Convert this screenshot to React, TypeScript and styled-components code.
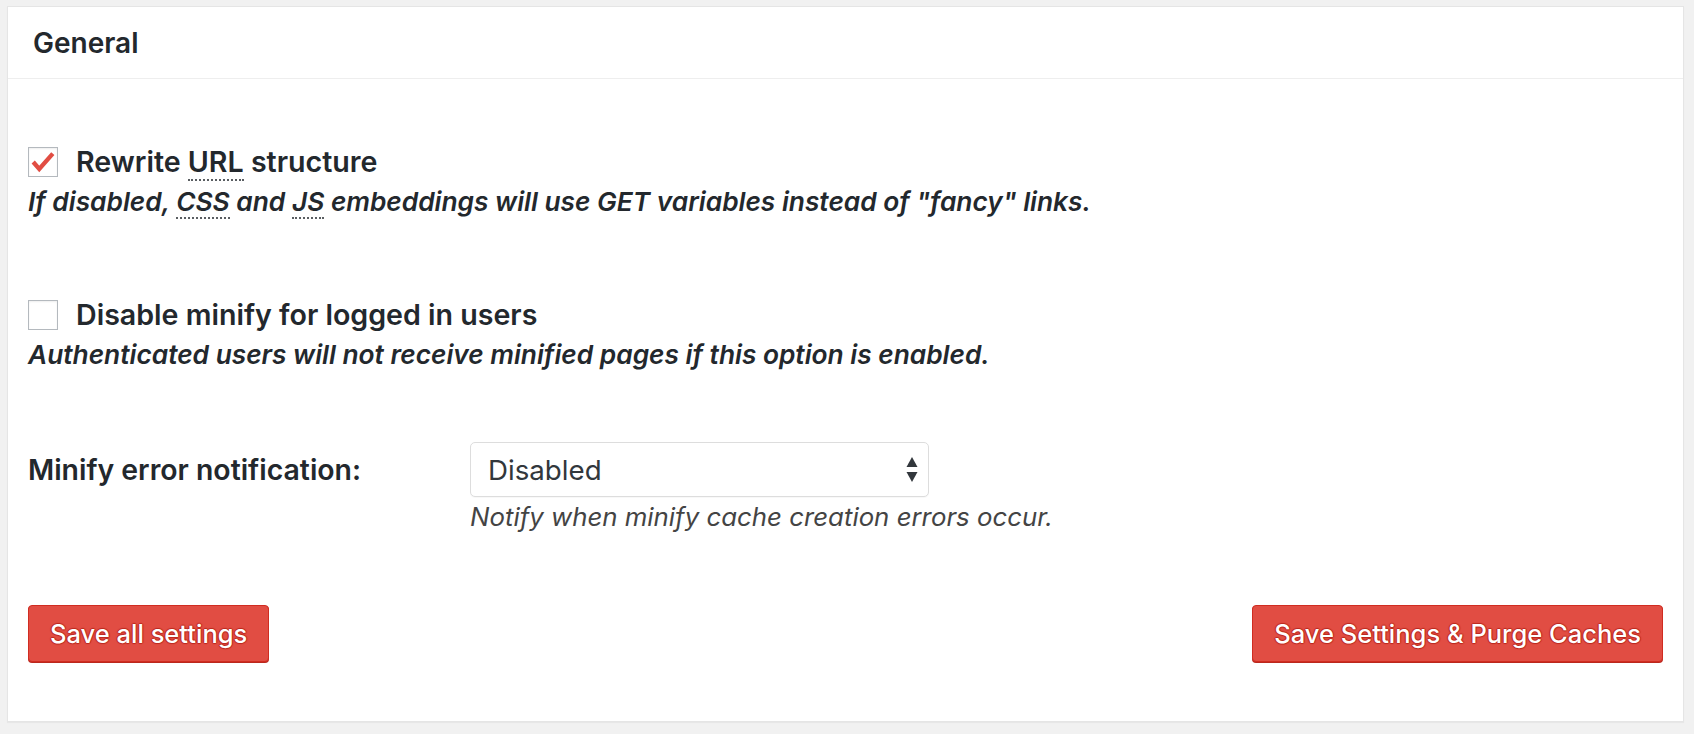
import React from 'react';
import styled, { createGlobalStyle } from 'styled-components';

const GlobalStyle = createGlobalStyle`
  html, body {
    margin: 0;
    padding: 0;
    background: #f1f1f1;
  }
  body {
    font-family: Inter, "Liberation Sans", Arial, sans-serif;
    color: #23282d;
    -webkit-font-smoothing: antialiased;
  }
`;

const Page = styled.div`
  padding: 6px 10px 10px 7px;
`;

const Panel = styled.section`
  background: #fff;
  border: 1px solid #e5e5e5;
  box-shadow: 0 1px 1px rgba(0, 0, 0, 0.04);
`;

const PanelHeader = styled.h2`
  margin: 0;
  height: 71px;
  display: flex;
  align-items: center;
  padding: 0 25px;
  border-bottom: 1px solid #eeeeee;
  font-size: 28px;
  font-weight: 600;
  color: #23282d;
`;

const PanelBody = styled.div`
  padding: 63px 20px 59px 20px;
`;

const Field = styled.div<{ $top?: number }>`
  margin-top: ${(p) => p.$top ?? 0}px;
`;

const CheckRow = styled.label`
  display: flex;
  align-items: center;
  gap: 18px;
  font-size: 28.6px;
  line-height: 40px;
  font-weight: 600;
  color: #23282d;
`;

const Box = styled.span`
  width: 30px;
  height: 30px;
  box-sizing: border-box;
  flex: none;
  border: 1px solid #b4b9be;
  background: #fff;
  box-shadow: inset 0 1px 2px rgba(0, 0, 0, 0.07);
  display: flex;
  align-items: center;
  justify-content: center;
`;

const Abbr = styled.abbr`
  text-decoration: none;
  border-bottom: 2px dotted rgba(35, 40, 45, 0.75);
`;

const Description = styled.p<{ $strong?: boolean }>`
  margin: 0;
  font-size: ${(p) => (p.$strong ? 26.3 : 25.8)}px;
  line-height: 40px;
  font-style: italic;
  font-weight: ${(p) => (p.$strong ? 600 : 400)};
  color: ${(p) => (p.$strong ? '#23282d' : '#444')};
`;

const SelectGrid = styled.div`
  display: grid;
  grid-template-columns: 442px auto;
  align-items: center;
  justify-content: start;
`;

const FieldLabel = styled.label`
  font-size: 28.4px;
  font-weight: 600;
  line-height: 40px;
  color: #23282d;
`;

const SelectBox = styled.div`
  width: 459px;
  height: 55px;
  box-sizing: border-box;
  border: 1px solid #dddddd;
  border-radius: 5px;
  background: #fff;
  box-shadow: 0 1px 1px rgba(0, 0, 0, 0.03);
  display: flex;
  align-items: center;
  justify-content: space-between;
  padding: 0 10px 0 17px;
  font-size: 27.7px;
  color: #32373c;
`;

const Hint = styled(Description)`
  grid-column: 2;
  margin-top: 1px;
  line-height: 38px;
`;

const Actions = styled.div`
  display: flex;
  justify-content: space-between;
  margin-top: 69px;
`;

const Button = styled.button`
  height: 57px;
  padding: 0 21px;
  box-sizing: border-box;
  background: #e14d43;
  border: 1px solid #d02c21;
  border-radius: 4px;
  box-shadow: 0 1px 0 #ba281e;
  color: #fff;
  font-family: Inter, "Liberation Sans", Arial, sans-serif;
  font-size: 25.5px;
  font-weight: 500;
  text-shadow: 0 -1px 1px #ba281e, 1px 0 1px #ba281e, 0 1px 1px #ba281e,
    -1px 0 1px #ba281e;
  cursor: pointer;
`;

const Check = () => (
  <svg width="30" height="30" viewBox="0 0 30 30">
    <path
      d="M4.5 15 L11 22.5 L25.5 6"
      fill="none"
      stroke="#e14d43"
      strokeWidth="4.6"
      strokeLinejoin="miter"
      strokeLinecap="butt"
    />
  </svg>
);

const Arrows = () => (
  <svg width="12" height="26" viewBox="0 0 12 26">
    <path d="M6 0 L11.5 10 L0.5 10 Z" fill="#32373c" />
    <path d="M0.5 15 L11.5 15 L6 25 Z" fill="#32373c" />
  </svg>
);

export default function App() {
  return (
    <>
      <GlobalStyle />
      <Page>
        <Panel>
          <PanelHeader>General</PanelHeader>
          <PanelBody>
            <Field>
              <CheckRow>
                <Box>
                  <Check />
                </Box>
                <span>
                  Rewrite <Abbr title="Uniform Resource Locator">URL</Abbr> structure
                </span>
              </CheckRow>
              <Description $strong>
                If disabled, <Abbr title="Cascading Style Sheet">CSS</Abbr> and{' '}
                <Abbr title="JavaScript">JS</Abbr> embeddings will use GET variables instead
                of "fancy" links.
              </Description>
            </Field>
            <Field $top={73}>
              <CheckRow>
                <Box />
                <span>Disable minify for logged in users</span>
              </CheckRow>
              <Description $strong>
                Authenticated users will not receive minified pages if this option is
                enabled.
              </Description>
            </Field>
            <Field $top={67}>
              <SelectGrid>
                <FieldLabel>Minify error notification:</FieldLabel>
                <SelectBox>
                  <span>Disabled</span>
                  <Arrows />
                </SelectBox>
                <Hint>Notify when minify cache creation errors occur.</Hint>
              </SelectGrid>
            </Field>
            <Actions>
              <Button>Save all settings</Button>
              <Button>Save Settings &amp; Purge Caches</Button>
            </Actions>
          </PanelBody>
        </Panel>
      </Page>
    </>
  );
}
